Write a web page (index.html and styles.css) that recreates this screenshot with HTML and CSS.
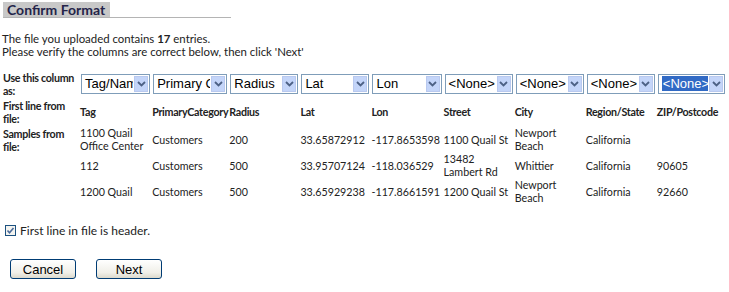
FILE: index.html
```html
<!DOCTYPE html>
<html lang="en">
<head>
    <meta charset="UTF-8">
    <title>Confirm Format</title>
    <link rel="stylesheet" href="styles.css">
</head>
<body>

    <div class="page">
        <div class="tab-bar">
            <h1 class="tab">Confirm Format</h1>
        </div>

        <p class="intro">
            The file you uploaded contains <b>17</b> entries.<br>
            Please verify the columns are correct below, then click 'Next'
        </p>

        <table class="columns">
            <colgroup>
                <col class="c-label">
                <col style="width:72px"><col style="width:77px"><col style="width:71px">
                <col style="width:71px"><col style="width:72px"><col style="width:71px">
                <col style="width:71px"><col style="width:71px"><col style="width:70px">
            </colgroup>
            <tr class="choose">
                <th>Use this column as:</th>
                <td><div class="select"><span class="value">Tag/Name</span><span class="arrow"><svg viewBox="0 0 9 6" width="9" height="6"><path d="M1 1l3.5 3.5L8 1" fill="none" stroke="#4d6185" stroke-width="1.8"/></svg></span></div></td>
                <td><div class="select"><span class="value">Primary Category</span><span class="arrow"><svg viewBox="0 0 9 6" width="9" height="6"><path d="M1 1l3.5 3.5L8 1" fill="none" stroke="#4d6185" stroke-width="1.8"/></svg></span></div></td>
                <td><div class="select"><span class="value">Radius</span><span class="arrow"><svg viewBox="0 0 9 6" width="9" height="6"><path d="M1 1l3.5 3.5L8 1" fill="none" stroke="#4d6185" stroke-width="1.8"/></svg></span></div></td>
                <td><div class="select"><span class="value">Lat</span><span class="arrow"><svg viewBox="0 0 9 6" width="9" height="6"><path d="M1 1l3.5 3.5L8 1" fill="none" stroke="#4d6185" stroke-width="1.8"/></svg></span></div></td>
                <td><div class="select"><span class="value">Lon</span><span class="arrow"><svg viewBox="0 0 9 6" width="9" height="6"><path d="M1 1l3.5 3.5L8 1" fill="none" stroke="#4d6185" stroke-width="1.8"/></svg></span></div></td>
                <td><div class="select"><span class="value">&lt;None&gt;</span><span class="arrow"><svg viewBox="0 0 9 6" width="9" height="6"><path d="M1 1l3.5 3.5L8 1" fill="none" stroke="#4d6185" stroke-width="1.8"/></svg></span></div></td>
                <td><div class="select"><span class="value">&lt;None&gt;</span><span class="arrow"><svg viewBox="0 0 9 6" width="9" height="6"><path d="M1 1l3.5 3.5L8 1" fill="none" stroke="#4d6185" stroke-width="1.8"/></svg></span></div></td>
                <td><div class="select"><span class="value">&lt;None&gt;</span><span class="arrow"><svg viewBox="0 0 9 6" width="9" height="6"><path d="M1 1l3.5 3.5L8 1" fill="none" stroke="#4d6185" stroke-width="1.8"/></svg></span></div></td>
                <td><div class="select focused"><span class="value"><span class="hl">&lt;None&gt;</span></span><span class="arrow"><svg viewBox="0 0 9 6" width="9" height="6"><path d="M1 1l3.5 3.5L8 1" fill="none" stroke="#4d6185" stroke-width="1.8"/></svg></span></div></td>
            </tr>
            <tr class="head">
                <th>First line from file:</th>
                <td>Tag</td>
                <td>PrimaryCategory</td>
                <td>Radius</td>
                <td>Lat</td>
                <td>Lon</td>
                <td>Street</td>
                <td>City</td>
                <td>Region/State</td>
                <td>ZIP/Postcode</td>
            </tr>
            <tr>
                <th rowspan="3" class="top">Samples from file:</th>
                <td>1100 Quail Office Center</td>
                <td>Customers</td>
                <td>200</td>
                <td>33.65872912</td>
                <td>-117.8653598</td>
                <td>1100 Quail St</td>
                <td>Newport Beach</td>
                <td>California</td>
                <td></td>
            </tr>
            <tr>
                <td>112</td>
                <td>Customers</td>
                <td>500</td>
                <td>33.95707124</td>
                <td>-118.036529</td>
                <td>13482 Lambert Rd</td>
                <td>Whittier</td>
                <td>California</td>
                <td>90605</td>
            </tr>
            <tr>
                <td>1200 Quail</td>
                <td>Customers</td>
                <td>500</td>
                <td>33.65929238</td>
                <td>-117.8661591</td>
                <td>1200 Quail St</td>
                <td>Newport Beach</td>
                <td>California</td>
                <td>92660</td>
            </tr>
        </table>

        <label class="header-check">
            <span class="box"><svg viewBox="0 0 9 9" width="9" height="9"><path d="M1.5 4.5l2 2.2L7.5 2" fill="none" stroke="#4a6a9a" stroke-width="1.6"/></svg></span>
            First line in file is header.
        </label>

        <div class="actions">
            <button>Cancel</button>
            <button>Next</button>
        </div>
    </div>

</body>
</html>
```

FILE: styles.css
```css
body {
    margin: 0;
    font-family: Lato, "Open Sans", sans-serif;
    font-size: 11.4px;
    line-height: 13px;
    color: #222;
    background-color: #fff;
}
.page {
    padding: 2px 0 0 2px;
}
.tab-bar {
    width: 228px;
    margin-left: 1px;
    border-bottom: 1px solid #b4b4b4;
}
.tab {
    display: inline-block;
    margin: 0;
    width: 103px;
    padding: 0 0 0 4px;
    height: 15px;
    line-height: 15px;
    background-color: #c8c8c8;
    color: #24244a;
    font-size: 14px;
    font-weight: bold;
}
.intro {
    margin: 14px 0 0 0;
}
.columns {
    margin-top: 13px;
    table-layout: fixed;
    border-collapse: collapse;
    width: 725px;
    font-size: 10.7px;
}
.c-label {
    width: 78px;
}
.columns th {
    text-align: left;
    font-weight: bold;
    letter-spacing: -0.3px;
    padding: 0 0 0 1px;
}
.columns td {
    padding: 0;
    height: 26px;
    vertical-align: middle;
}
.columns th.top {
    vertical-align: top;
    padding-top: 1px;
}
.head td {
    font-weight: bold;
    letter-spacing: -0.3px;
    height: 29px;
}
.select {
    display: flex;
    align-items: stretch;
    width: calc(100% - 5px);
    height: 18px;
    margin-left: 1px;
    border: 1px solid #7f9db9;
    background-color: #fff;
    font-family: "Liberation Sans", Arial, sans-serif;
    font-size: 13px;
    color: #000;
}
.select .value {
    flex: 1;
    overflow: hidden;
    white-space: nowrap;
    padding-left: 3px;
    line-height: 18px;
}
.select .arrow {
    flex: none;
    width: 14px;
    margin: 1px;
    display: flex;
    align-items: center;
    justify-content: center;
    background-color: #c4d5f9;
    border: 1px solid #b9c9ef;
    box-sizing: border-box;
}
.select .hl {
    background-color: #316ac5;
    color: #fff;
    padding: 0 1px;
}
.header-check {
    display: flex;
    align-items: center;
    gap: 4px;
    margin: 20px 0 0 3px;
    font-size: 12px;
}
.box {
    width: 11px;
    height: 11px;
    box-sizing: border-box;
    border: 1px solid #1c5180;
    background-color: #f4f4f0;
    display: flex;
    align-items: center;
    justify-content: center;
}
.actions {
    display: flex;
    gap: 20px;
    margin: 22px 0 0 8px;
}
button {
    width: 66px;
    height: 20px;
    padding: 0;
    border: 1px solid #003c74;
    border-radius: 3px;
    background: linear-gradient(#ffffff, #f0efe8 70%, #dcd9cc);
    font-family: "Liberation Sans", Arial, sans-serif;
    font-size: 13px;
    color: #000;
}
```
